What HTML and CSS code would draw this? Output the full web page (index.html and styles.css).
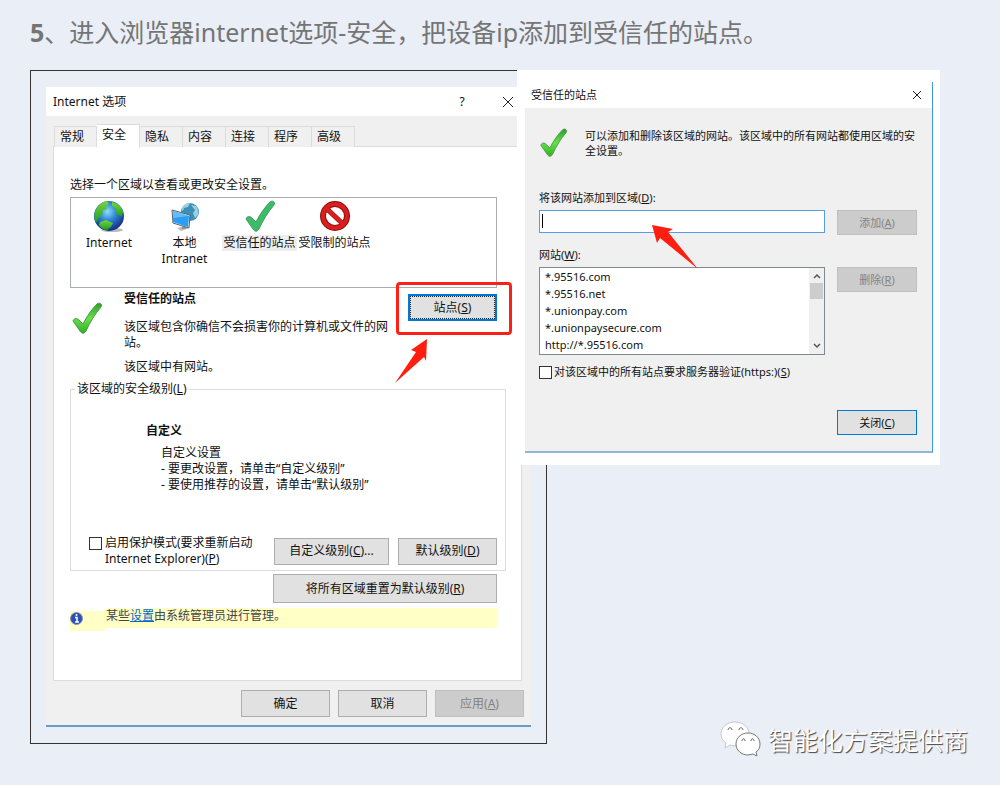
FILE: index.html
```html
<!DOCTYPE html>
<html lang="zh-CN">
<head>
    <meta charset="UTF-8">
    <meta name="viewport" content="width=device-width, initial-scale=1.0">
    <title>添加受信任的站点</title>
    <link rel="stylesheet" href="styles.css">
</head>
<body>
    <main class="article">
        <h1><b>5</b>、进入浏览器internet选项-安全，把设备ip添加到受信任的站点。</h1>

        <div class="shots">
            <section class="frame">
                <div class="dialog options">
                    <header class="titlebar">
                        <h2>Internet 选项</h2>
                        <button type="button" class="win-btn" aria-label="帮助">?</button>
                        <button type="button" class="win-btn" aria-label="关闭">
                            <svg width="12" height="12" viewBox="0 0 12 12"><path d="M1 1l10 10M11 1L1 11" stroke="#222" fill="none"/></svg>
                        </button>
                    </header>

                    <nav class="tabs">
                        <button type="button">常规</button>
                        <button type="button" class="active">安全</button>
                        <button type="button">隐私</button>
                        <button type="button">内容</button>
                        <button type="button">连接</button>
                        <button type="button">程序</button>
                        <button type="button">高级</button>
                    </nav>

                    <div class="panel">
                        <p>选择一个区域以查看或更改安全设置。</p>
                        <ul class="zones">
                            <li>
                                <svg width="32" height="32" viewBox="0 0 32 32">
                                    <defs>
                                        <radialGradient id="sea" cx="45%" cy="35%" r="65%">
                                            <stop offset="0" stop-color="#8fdcf8"/>
                                            <stop offset=".45" stop-color="#2f86d8"/>
                                            <stop offset="1" stop-color="#122a80"/>
                                        </radialGradient>
                                        <linearGradient id="land" x1="0" y1="0" x2="0" y2="1">
                                            <stop offset="0" stop-color="#74d63a"/>
                                            <stop offset="1" stop-color="#1f9a2c"/>
                                        </linearGradient>
                                    </defs>
                                    <ellipse cx="19" cy="30" rx="11" ry="2" fill="#bbb"/>
                                    <circle cx="16" cy="16" r="15" fill="url(#sea)"/>
                                    <path d="M2 12C4 6 8 2 14 1l2 3-3 2 1 3-4 1-1 5-4 4-2 4C1 20 1 16 2 12z" fill="url(#land)"/>
                                    <path d="M19 2c5 1 9 4 11 9l-1 6-3-2-4-1 1-5-4-3z" fill="url(#land)"/>
                                    <path d="M7 22l6-2 7 3-2 4-4 3c-3 0-6-2-8-5z" fill="url(#land)"/>
                                </svg>
                                <span>Internet</span>
                            </li>
                            <li>
                                <svg width="32" height="32" viewBox="0 0 32 32">
                                    <circle cx="21" cy="12" r="9" fill="#3c8fb5"/>
                                    <path d="M12 9c2-4 5-6 9-6l-2 4-4 1-1 3zM22 5l5 1c2 3 3 6 2 9l-3 3-2-5 2-3z" fill="#9bd0e4"/>
                                    <path d="M8 28l8-2 4 2-8 3z" fill="#b5bcc2"/>
                                    <path d="M13 25l4 1v3h-4z" fill="#8d979f"/>
                                    <path d="M3 10l18 5-1 13-16-5z" fill="#e4edf2" stroke="#56646e"/>
                                    <path d="M4 11l16 5-1 11-15-5z" fill="#2a9df4"/>
                                    <path d="M4 11l16 5-16 2z" fill="#65bcfa"/>
                                </svg>
                                <span>本地<br>Intranet</span>
                            </li>
                            <li class="selected">
                                <svg width="32" height="32" viewBox="0 0 32 32">
                                    <path d="M2 19c1-3 4-3 6-1l4 4C16 14 21 7 26 2c2-2 6 0 4 3-6 7-11 15-15 24-2 3-4 3-6 0z" fill="#3dbb68" stroke="#3a9f5c"/>
                                </svg>
                                <span>受信任的站点</span>
                            </li>
                            <li>
                                <svg width="32" height="32" viewBox="0 0 32 32">
                                    <circle cx="16" cy="16" r="12" fill="#fff" stroke="#8f0d0d" stroke-width="6"/>
                                    <path d="M7 8l18 17" stroke="#8f0d0d" stroke-width="5"/>
                                    <circle cx="16" cy="16" r="12" fill="none" stroke="#d81e1e" stroke-width="4"/>
                                    <path d="M7 8l18 17" stroke="#d81e1e" stroke-width="4"/>
                                </svg>
                                <span>受限制的站点</span>
                            </li>
                        </ul>

                        <div class="zone-info">
                            <svg class="check" width="32" height="32" viewBox="0 0 32 32">
                                <defs>
                                    <linearGradient id="tick" x1="0" y1="0" x2="0" y2="1">
                                        <stop offset="0" stop-color="#2f9e2b"/>
                                        <stop offset=".5" stop-color="#66e04a"/>
                                        <stop offset="1" stop-color="#35ad27"/>
                                    </linearGradient>
                                </defs>
                                <path d="M2 19c1-3 4-3 6-1l4 4C16 14 21 7 26 2c2-2 6 0 4 3-6 7-11 15-15 24-2 3-4 3-6 0z" fill="url(#tick)" stroke="#4a9a45"/>
                            </svg>
                            <div class="zone-text">
                                <h3>受信任的站点</h3>
                                <p>该区域包含你确信不会损害你的计算机或文件的网站。</p>
                                <p>该区域中有网站。</p>
                            </div>
                            <div class="sites">
                                <button type="button" class="btn focused">站点(<u>S</u>)</button>
                                <span class="mark"></span>
                                <svg class="arrow arrow-up" width="34" height="46" viewBox="0 0 34 46"><path d="M33 1L17 12l5 2L1 45l29-26 2 4z" fill="#ff1e0f"/></svg>
                            </div>
                        </div>

                        <fieldset>
                            <legend>该区域的安全级别(<u>L</u>)</legend>
                            <div class="level">
                                <h3>自定义</h3>
                                <p>自定义设置<br>- 要更改设置，请单击“自定义级别”<br>- 要使用推荐的设置，请单击“默认级别”</p>
                            </div>
                            <div class="level-row">
                                <input type="checkbox" id="protect">
                                <label for="protect">启用保护模式(要求重新启动<br>Internet Explorer)(<u>P</u>)</label>
                                <button type="button" class="btn custom">自定义级别(<u>C</u>)...</button>
                                <button type="button" class="btn default">默认级别(<u>D</u>)</button>
                            </div>
                        </fieldset>
                        <button type="button" class="btn reset">将所有区域重置为默认级别(<u>R</u>)</button>

                        <div class="notice">
                            <span class="notice-icon">
                                <svg width="13" height="13" viewBox="0 0 26 26">
                                    <circle cx="13" cy="13" r="12" fill="#2b50b8" stroke="#8d93a8" stroke-width="2"/>
                                    <path d="M10 11h4v9M10 20h8" stroke="#fff" stroke-width="3" fill="none"/>
                                    <circle cx="13" cy="6" r="2" fill="#fff"/>
                                </svg>
                            </span>
                            <p>某些<a href="#">设置</a>由系统管理员进行管理。</p>
                        </div>
                    </div>

                    <footer class="actions">
                        <button type="button" class="btn">确定</button>
                        <button type="button" class="btn">取消</button>
                        <button type="button" class="btn" disabled>应用(<u>A</u>)</button>
                    </footer>
                </div>
            </section>

            <section class="card">
                <div class="dialog trusted">
                    <header class="titlebar">
                        <h2>受信任的站点</h2>
                        <button type="button" class="win-btn" aria-label="关闭">
                            <svg width="10" height="10" viewBox="0 0 10 10"><path d="M1 1l8 8M9 1L1 9" stroke="#222" fill="none"/></svg>
                        </button>
                    </header>

                    <div class="trusted-body">
                        <div class="intro">
                            <svg width="29" height="29" viewBox="0 0 32 32">
                                <path d="M2 19c1-3 4-3 6-1l4 4C16 14 21 7 26 2c2-2 6 0 4 3-6 7-11 15-15 24-2 3-4 3-6 0z" fill="url(#tick)" stroke="#4a9a45"/>
                            </svg>
                            <p>可以添加和删除该区域的网站。该区域中的所有网站都使用区域的安全设置。</p>
                        </div>

                        <label for="site">将该网站添加到区域(<u>D</u>):</label>
                        <div class="row">
                            <div class="field">
                                <input type="text" id="site">
                                <span class="caret"></span>
                                <svg class="arrow arrow-left" width="48" height="46" viewBox="0 0 48 46"><path d="M1 1l5 18 3-5 38 31-30-37 5-3z" fill="#ff1e0f"/></svg>
                            </div>
                            <button type="button" class="btn" disabled>添加(<u>A</u>)</button>
                        </div>

                        <label for="list">网站(<u>W</u>):</label>
                        <div class="row">
                            <div class="list">
                                <select id="list" size="5">
                                    <option>*.95516.com</option>
                                    <option>*.95516.net</option>
                                    <option>*.unionpay.com</option>
                                    <option>*.unionpaysecure.com</option>
                                    <option>http://*.95516.com</option>
                                </select>
                                <div class="scrollbar">
                                    <svg width="8" height="6" viewBox="0 0 8 6"><path d="M1 5l3-3 3 3" stroke="#555" stroke-width="1.500" fill="none"/></svg>
                                    <span class="thumb"></span>
                                    <svg width="8" height="6" viewBox="0 0 8 6"><path d="M1 1l3 3 3-3" stroke="#555" stroke-width="1.500" fill="none"/></svg>
                                </div>
                            </div>
                            <button type="button" class="btn" disabled>删除(<u>R</u>)</button>
                        </div>

                        <div class="verify">
                            <input type="checkbox" id="https">
                            <label for="https">对该区域中的所有站点要求服务器验证(https:)(<u>S</u>)</label>
                        </div>
                        <button type="button" class="btn close">关闭(<u>C</u>)</button>
                    </div>
                </div>
            </section>
        </div>

        <div class="watermark">
            <svg width="42" height="38" viewBox="0 0 42 38">
                <g fill="#fff" stroke="#777">
                    <path d="M15 1C7 1 1 6 1 13c0 4 2 7 5 9l-1 5 5-3 5 1c8 0 14-5 14-12S23 1 15 1z" stroke="#c5cad2"/>
                    <path d="M28 12c-7 0-12 5-12 11s5 11 12 11l5-1 4 2-1-4c3-2 4-5 4-8 0-6-5-11-12-11z"/>
                </g>
                <g fill="none" stroke="#666" stroke-width="1">
                    <path d="M8 9c0-3 4-3 4 0M19 9c0-3 4-3 4 0M22 20c0-3 3-3 3 0M31 20c0-3 3-3 3 0"/>
                </g>
            </svg>
            <span>智能化方案提供商</span>
        </div>
    </main>
</body>
</html>
```
FILE: styles.css
```css
* {
    box-sizing: border-box;
}

body {
    margin: 0;
    font-family: "Noto Sans", "Noto Sans CJK SC", sans-serif;
    font-size: 12px;
    line-height: 16px;
    color: #111;
    background-color: #e9eef7;
}

h1, h2, h3, p, ul {
    margin: 0;
    padding: 0;
}

h3 {
    font-size: 12px;
}

button, input, select {
    margin: 0;
    font: inherit;
    color: inherit;
}

svg {
    display: block;
    flex: none;
}

.article {
    position: relative;
    padding: 15px 30px 41px;
}

h1 {
    margin-bottom: 21px;
    font-size: 25px;
    font-weight: normal;
    line-height: 34px;
    color: #757575;
}

.shots {
    display: flex;
    align-items: flex-start;
}

.frame {
    flex: 0 0 55%;
    padding: 16px 15px;
    border: 1px solid #333;
}

/* the second window lies over the right edge of the first */
.card {
    position: relative;
    flex: 0 0 45%;
    margin-left: -30px;
    padding: 12px 7px 12px 8px;
    background-color: #fff;
}

.dialog {
    background-color: #f0f0f0;
}

.titlebar {
    display: flex;
    align-items: center;
    background-color: #fff;
}

.titlebar h2 {
    flex: 1;
    font-size: inherit;
    font-weight: normal;
}

.win-btn {
    display: flex;
    align-items: center;
    justify-content: center;
    width: 46px;
    height: 26px;
    padding: 0;
    border: none;
    background: none;
}

.btn {
    height: 27px;
    padding: 0;
    border: 1px solid #adadad;
    background-color: #e1e1e1;
    white-space: nowrap;
}

.btn:disabled {
    border-color: #bfbfbf;
    background-color: #ccc;
    color: #838383;
}

input[type="checkbox"] {
    flex: none;
    appearance: none;
    width: 13px;
    height: 13px;
    border: 1px solid #333;
    background-color: #fff;
}

/* Internet options */
.options {
    border-bottom: 2px solid #6a9dc4;
}

.options .titlebar {
    height: 29px;
    padding-left: 7px;
}

.tabs {
    display: flex;
    align-items: flex-end;
    height: 31px;
    padding-left: 8px;
}

.tabs button {
    height: 21px;
    padding: 0 13px 0 5px;
    border: 1px solid #dcdcdc;
    border-width: 1px 1px 0 0;
    background-color: #f0f0f0;
}

.tabs button:first-child {
    padding-right: 12px;
    border-left-width: 1px;
}

.tabs .active {
    position: relative;
    height: 24px;
    margin-bottom: -1px;
    padding-bottom: 3px;
    background-color: #fff;
}

.panel {
    min-height: 535px;
    margin: -1px 9px 0 7px;
    padding: 30px 24px 0 16px;
    border: 1px solid #dcdcdc;
    background-color: #fff;
}

.zones {
    display: flex;
    height: 91px;
    margin-top: 4px;
    padding-top: 2px;
    border: 1px solid #a9abb5;
    list-style: none;
}

.zones li {
    display: flex;
    flex-direction: column;
    align-items: center;
    width: 75px;
    text-align: center;
    white-space: nowrap;
}

.zones li:first-child {
    width: 76px;
}

.zones span {
    margin-top: 3px;
    padding: 0 1px;
}

.zones .selected span {
    background-color: #eee;
}

.zone-info {
    display: flex;
    align-items: flex-start;
    padding-top: 3px;
}

.zone-info .check {
    margin: 11px 21px 0 1px;
}

.zone-text {
    flex: 1;
}

.zone-text h3 {
    margin-bottom: 12px;
}

.zone-text p + p {
    margin-top: 8px;
}

.sites {
    position: relative;
    margin: 3px 0 0 16px;
}

.sites .btn {
    display: block;
    width: 89px;
}

.btn.focused {
    border: 2px solid #0078d7;
    outline: 1px dotted #222;
    outline-offset: -3px;
}

.mark {
    position: absolute;
    inset: -12px -15px -14px -12px;
    border: 3px solid #ff2015;
    border-radius: 4px;
}

.arrow {
    position: absolute;
}

.arrow-up {
    top: 44px;
    left: -14px;
}

fieldset {
    min-width: 0;
    margin: 6px -9px 0 0;
    padding: 26px 8px 3px 18px;
    border: 1px solid #dcdcdc;
}

legend {
    margin-left: -14px;
    padding: 0 2px;
}

.level {
    padding-left: 57px;
}

.level p {
    margin: 6px 0 0 15px;
}

.level-row {
    display: flex;
    align-items: center;
    margin-top: 42px;
}

.level-row input {
    margin: 0 3px 16px 0;
}

.level-row label {
    flex: 1;
}

.level-row .custom {
    width: 115px;
    margin: 0 9px 0 12px;
}

.level-row .default {
    width: 99px;
}

.reset {
    display: block;
    width: 224px;
    height: 29px;
    margin: 3px 0 0 auto;
}

.notice {
    display: flex;
    margin-top: 5px;
}

.notice-icon {
    width: 36px;
    height: 20px;
    margin-top: 3px;
    padding-top: 1px;
    background-color: #ffffc6;
}

.notice p {
    flex: 1;
    height: 20px;
    color: #444;
    background-color: #ffffc6;
}

.notice a {
    color: #0066cc;
}

.actions {
    display: flex;
    justify-content: flex-end;
    gap: 8px;
    padding: 9px 7px 8px;
}

.actions .btn {
    width: 89px;
}

/* Trusted sites */
.trusted {
    border-right: 1px solid #3f96dd;
    border-bottom: 2px solid #8fb8d6;
    font-size: 11px;
}

.trusted .titlebar {
    height: 26px;
    padding-left: 6px;
}

.trusted .win-btn {
    width: 30px;
}

.trusted-body {
    display: flex;
    flex-direction: column;
    padding: 20px 15px 16px 14px;
}

.intro {
    display: flex;
    gap: 17px;
    margin-bottom: 32px;
    line-height: 15px;
}

.row {
    display: flex;
    align-items: flex-start;
    gap: 12px;
    margin: 4px 0 12px;
}

.trusted .btn {
    width: 80px;
    height: 25px;
}

.field {
    position: relative;
    flex: 1;
}

.field input {
    display: block;
    width: 100%;
    height: 23px;
    padding: 0 5px;
    border: 1px solid #569de5;
    background-color: #fff;
}

.caret {
    position: absolute;
    top: 4px;
    left: 3px;
    width: 1px;
    height: 14px;
    background-color: #000;
}

.arrow-left {
    top: 14px;
    left: 112px;
}

.list {
    display: flex;
    flex: 1;
    height: 88px;
    border: 1px solid #828790;
    background-color: #fff;
}

.list select {
    flex: 1;
    padding: 1px 0 0;
    border: none;
    background: none;
    overflow: hidden;
}

.list option {
    min-height: 17px;
    padding: 0 5px;
    line-height: 17px;
}

.scrollbar {
    display: flex;
    flex-direction: column;
    align-items: center;
    width: 15px;
    padding: 5px 0;
    background-color: #f0f0f0;
}

.thumb {
    width: 13px;
    height: 16px;
    margin: 4px 0 auto;
    background-color: #cdcdcd;
}

.verify {
    display: flex;
    align-items: center;
    gap: 2px;
    margin-top: -3px;
}

.btn.close {
    align-self: flex-end;
    margin-top: 30px;
    border: 1px solid #0078d7;
}

.watermark {
    position: absolute;
    right: 32px;
    bottom: 26px;
    display: flex;
    align-items: center;
    gap: 6px;
    font-size: 25px;
    line-height: 36px;
    color: #fff;
    text-shadow: 1px 1px 1px #444;
}
```
